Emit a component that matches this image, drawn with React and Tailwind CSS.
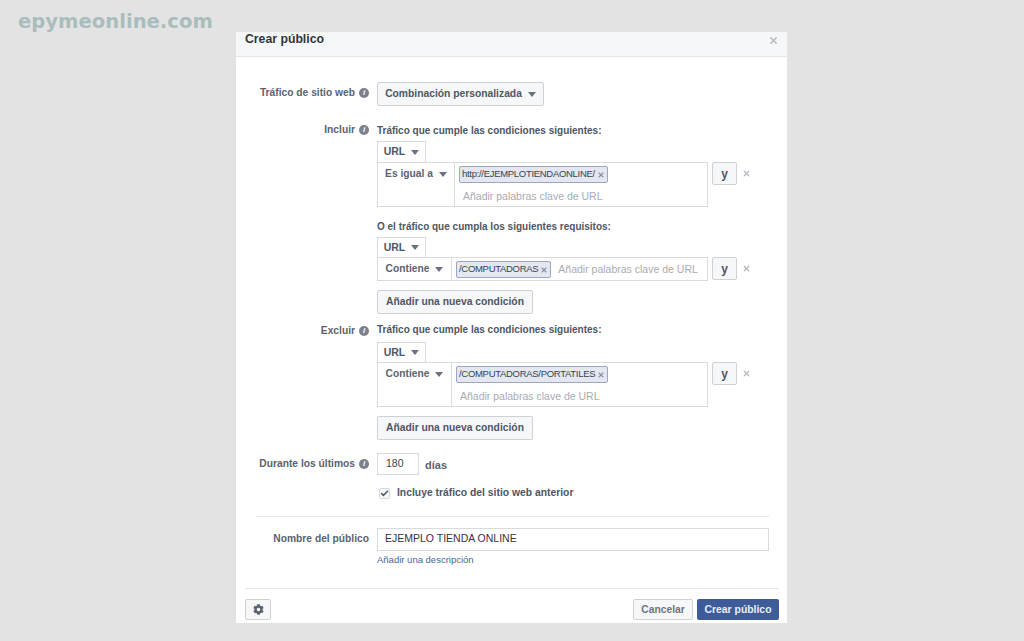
import { FaCog } from "react-icons/fa";
import { Check, X } from "lucide-react";

const Caret = () => (
  <span className="ml-[6px] inline-block h-0 w-0 border-x-[4.5px] border-t-[5px] border-x-transparent border-t-[#6a7180]" />
);

const InfoDot = () => (
  <span className="ml-[4px] inline-flex h-[10px] w-[10px] items-center justify-center rounded-full bg-[#7b818c] text-[8px] font-bold italic leading-none text-white">
    i
  </span>
);

const Label = ({ children, info, className = "" }) => (
  <div className={`flex w-[133px] shrink-0 items-center justify-end text-[10.25px] font-bold text-[#5b6270] ${className}`}>
    {children}
    {info && <InfoDot />}
  </div>
);

const Button = ({ children, className = "" }) => (
  <div className={`flex items-center justify-center rounded-[2px] border border-[#d0d1d5] bg-[#f6f7f8] text-[10.3px] font-bold text-[#4e5665] ${className}`}>
    {children}
  </div>
);

const Heading = ({ children, className = "text-[10px]" }) => (
  <div className={`font-bold leading-[12px] text-[#4e5665] ${className}`}>
    {children}
  </div>
);

const Tag = ({ children }) => (
  <span className="flex h-[17px] items-center rounded-[2px] border border-[#9aa6c4] bg-[#e4e7f0] pl-[2px] pr-[2px] text-[9.5px] tracking-[-0.3px] text-[#3b4252]">
    {children}
    <X className="ml-[2px] h-[8px] w-[8px] text-[#8a93a8]" strokeWidth={3.5} />
  </span>
);

const UrlTab = ({ height = "h-[20px]" }) => (
  <div className={`flex w-[49px] items-center justify-center border border-b-0 border-[#d8dae0] text-[10.5px] font-bold text-[#4e5665] ${height}`}>
    URL
    <Caret />
  </div>
);

// one condition: operator on the left, tag and keyword input on the right
const Condition = ({ operator, tag, stacked, leftWidth }) => (
  <div className="flex items-start">
    <div className={`flex border border-[#d8dae0] ${stacked ? "h-[45px]" : "h-[24px]"} w-[331px]`}>
      <div className={`flex h-[22px] shrink-0 items-center justify-center text-[10.25px] font-bold text-[#5b6270] ${leftWidth}`}>
        {operator}
        <Caret />
      </div>
      <div className={`flex min-w-0 flex-1 border-l border-[#d8dae0] pl-[4px] pt-[3px] ${stacked ? "flex-col" : "items-start"}`}>
        <div className="flex">
          <Tag>{tag}</Tag>
        </div>
        <div className={`whitespace-nowrap text-[10.5px] text-[#a8abb3] ${stacked ? "pl-[4px] pt-[6px]" : "pl-[7px] pt-[1px]"}`}>
          Añadir palabras clave de URL
        </div>
      </div>
    </div>
    <Button className="ml-[4px] h-[23px] w-[25px] text-[12px]">y</Button>
    <X className="ml-[5px] mt-[7px] h-[9px] w-[9px] text-[#b4b8c0]" strokeWidth={3.5} />
  </div>
);

export default function App() {
  return (
    <div className="relative h-[641px] overflow-hidden bg-[#e3e3e3] pl-[236px] pt-[32px] font-['Liberation_Sans',sans-serif]">
      <div className="absolute left-[18px] top-[9px] font-['DejaVu_Sans',sans-serif] text-[19.6px] font-bold leading-[26px] text-[#a9bdbd]">
        epymeonline.com
      </div>

      <div className="flex h-[591px] w-[551px] flex-col bg-white">
        <div className="flex h-[25px] shrink-0 items-start justify-between border-b border-[#e5e6e9] bg-[#f6f7f8] pl-[9px] pr-[8px]">
          <span className="text-[12.25px] font-bold leading-[15px] text-[#2f3542]">Crear público</span>
          <X className="mt-[3px] h-[11px] w-[11px] text-[#b8bbc2]" strokeWidth={3.5} />
        </div>

        <div className="flex pt-[25px]">
          <Label className="h-[22px]" info>Tráfico de sitio web</Label>
          <Button className="ml-[8px] h-[24px] w-[167px]">
            Combinación personalizada
            <Caret />
          </Button>
        </div>

        <div className="flex pt-[19px]">
          <Label className="h-[9px]" info>Incluir</Label>
          <div className="ml-[8px] flex flex-col">
            <Heading className="mb-[4px] text-[10px]">Tráfico que cumple las condiciones siguientes:</Heading>
            <UrlTab height="h-[21px]" />
            <Condition operator="Es igual a" tag="http://EJEMPLOTIENDAONLINE/" stacked leftWidth="w-[76px]" />
            <Heading className="mb-[4px] mt-[14px] text-[10px]">O el tráfico que cumpla los siguientes requisitos:</Heading>
            <UrlTab />
            <Condition operator="Contiene" tag="/COMPUTADORAS" leftWidth="w-[73px]" />
            <Button className="mt-[9px] h-[24px] w-[156px]">Añadir una nueva condición</Button>
          </div>
        </div>

        <div className="flex pt-[10px]">
          <Label className="h-[13px]" info>Excluir</Label>
          <div className="ml-[8px] flex flex-col">
            <Heading className="mb-[6px] text-[10px]">Tráfico que cumple las condiciones siguientes:</Heading>
            <UrlTab />
            <Condition operator="Contiene" tag="/COMPUTADORAS/PORTATILES" stacked leftWidth="w-[73px]" />
            <Button className="mt-[9px] h-[24px] w-[156px]">Añadir una nueva condición</Button>
          </div>
        </div>

        <div className="flex pt-[13px]">
          <Label className="h-[22px]" info>Durante los últimos</Label>
          <div className="ml-[8px] flex h-[22px] w-[42px] items-center border border-[#d8dae0] pl-[8px] text-[10.5px] text-[#3b4252]">180</div>
          <span className="ml-[6px] flex items-center pt-[2px] text-[11px] font-bold text-[#5b6270]">días</span>
        </div>

        <div className="ml-[143px] flex items-center pt-[12px]">
          <span className="flex h-[11px] w-[11px] items-center justify-center rounded-[2px] border border-[#d8dae0] bg-[#f6f7f8]">
            <Check className="h-[9px] w-[9px] text-[#4e5665]" strokeWidth={4} />
          </span>
          <Heading className="ml-[7px] text-[10.35px]">Incluye tráfico del sitio web anterior</Heading>
        </div>

        <div className="ml-[20px] mr-[18px] mt-[17px] h-px bg-[#e3e4e7]" />

        <div className="flex pt-[11px]">
          <Label className="h-[21px]">Nombre del público</Label>
          <div className="ml-[8px] flex h-[23px] w-[392px] items-center border border-[#d8dae0] pb-[1px] pl-[7px] text-[10.5px] text-[#3a2f4a]">
            EJEMPLO TIENDA ONLINE
          </div>
        </div>
        <div className="ml-[141px] pt-[2px] text-[9.5px] leading-[13px] text-[#4a6596]">Añadir una descripción</div>

        <div className="ml-[9px] mr-[8px] mt-[22px] h-px bg-[#e3e4e7]" />

        <div className="flex items-start justify-between pl-[9px] pr-[8px] pt-[10px]">
          <Button className="h-[21px] w-[26px]">
            <FaCog className="h-[11px] w-[11px] text-[#5b6270]" />
          </Button>
          <div className="flex gap-[4px]">
            <Button className="h-[21px] w-[60px] text-[#6d7480]">Cancelar</Button>
            <div className="flex h-[21px] w-[82px] items-center justify-center rounded-[2px] bg-[#3f5c9a] text-[10.4px] font-bold text-[#e8edf6]">
              Crear público
            </div>
          </div>
        </div>
      </div>
    </div>
  );
}
